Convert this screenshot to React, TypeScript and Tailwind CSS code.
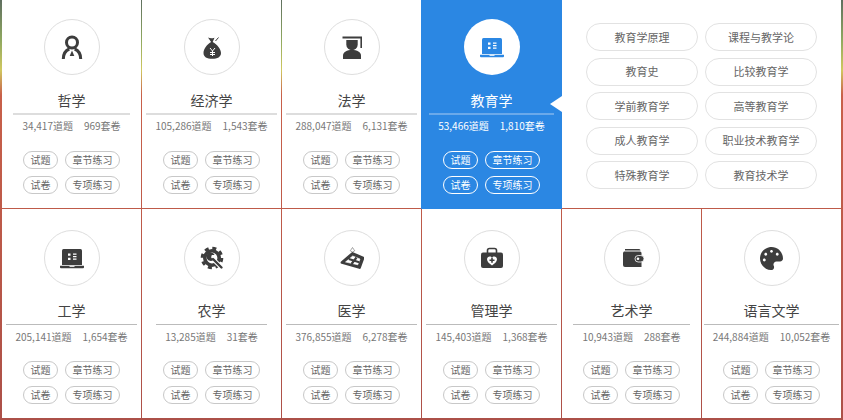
import { ReactNode } from "react";
import { FaPalette } from "react-icons/fa";

const DARK = "#3d3d3d";

function IconPhilosophy() {
  return (
    <svg width="24" height="24" viewBox="0 0 24 24" fill="none">
      <circle cx="12" cy="7.500" r="5.500" stroke={DARK} strokeWidth="3" />
      <path d="M3.300 24c0-5 2.500-8.500 6-10M20.700 24c0-5-2.500-8.500-6-10" stroke={DARK} strokeWidth="3" />
      <path d="M12 15.500l2.300 5.500h-4.600z" fill={DARK} />
    </svg>
  );
}

function IconMoneyBag() {
  return (
    <svg width="24" height="24" viewBox="0 0 24 24" fill="none">
      <path
        d="M8 2.500c2 1 4 1 6.500.2l-1.800 4.300c4.500 2.500 8.300 7 8.300 11 0 4-3.500 5.800-8.800 5.800s-8.700-1.800-8.700-5.800c0-4 3.300-8.500 7.600-11z"
        fill={DARK}
      />
      <path d="M15.500 6l3-3.500" stroke={DARK} strokeWidth="1" />
      <path d="M10 13l2.500 3 2.500-3M12.500 16v5M10 17.500h5M10 19.500h5" stroke="#fff" strokeWidth="1" />
    </svg>
  );
}

function IconGraduate() {
  return (
    <svg width="24" height="24" viewBox="0 0 24 24" fill="none">
      <path d="M2.500 1.500h19.500v11.500h-1.600V3.500H2.500z" fill={DARK} />
      <path d="M6.300 5h11.400v4.500a5.700 5.700 0 01-11.400 0z" fill={DARK} />
      <path d="M3 24v-3.500c0-3.500 4-5.500 9-5.500s9 2 9 5.500V24z" fill={DARK} />
    </svg>
  );
}

function IconLaptop({ color, cut }: { color: string; cut: string }) {
  return (
    <svg width="24" height="24" viewBox="0 0 24 24" fill="none">
      <path d="M2 4.500a1.500 1.500 0 011.500-1.500h17a1.500 1.500 0 011.500 1.500V19H2z" fill={color} />
      <path d="M0 19.800h24v1.400a1 1 0 01-1 1H1a1 1 0 01-1-1z" fill={color} />
      <path d="M9.500 19.800h5v1h-5z" fill={cut} />
      <path d="M8 7.500h2.500v2.200H8zM13 7.500h3.500v1.200H13zM13 10h3.500v1.200H13zM8 11.800h2.500V14H8zM13 12.500h3.500v1.200H13z" fill={cut} />
    </svg>
  );
}

function IconGear() {
  return (
    <svg width="24" height="24" viewBox="0 0 24 24" fill="none">
      <circle cx="12" cy="12" r="7.200" stroke={DARK} strokeWidth="3.600" />
      <circle cx="12" cy="12" r="9.800" stroke={DARK} strokeWidth="3" strokeDasharray="4 3.700" />
      <path d="M12 12l9 9" stroke="#fff" strokeWidth="4.500" />
      <path d="M13 13l8.500 8.500" stroke={DARK} strokeWidth="2.400" strokeLinecap="round" />
      <path d="M14 8.500a4.200 4.200 0 10-.5 5.500l-2.500-2.500.3-2.500z" fill={DARK} transform="rotate(10 12 12)" />
    </svg>
  );
}

function IconScale() {
  return (
    <svg width="24" height="24" viewBox="0 0 24 24" fill="none">
      <path d="M12.500 1.500l1.300 2 1 1.200-2.300 1.300-2.300-1.300 1-1.200z" stroke="#888" strokeWidth=".8" />
      <path d="M2 16.500L12.500 7.500 23 12 19.500 21.500z" fill={DARK} stroke={DARK} strokeWidth="2.800" strokeLinejoin="round" />
      <path d="M5.500 16 12.700 10 20 13 17.800 18.800z" fill="#fff" stroke="#fff" strokeWidth=".6" strokeLinejoin="round" />
      <path d="M16.500 11.500l-5 6.500M8.800 13l10.400 3.200" stroke={DARK} strokeWidth="2.200" />
    </svg>
  );
}

function IconBag() {
  return (
    <svg width="24" height="24" viewBox="0 0 24 24" fill="none">
      <path d="M7.500 8V4.500a2 2 0 012-2h5a2 2 0 012 2V8" stroke={DARK} strokeWidth="1.600" />
      <rect x="1" y="6.500" width="22" height="15.500" rx="2" fill={DARK} />
      <path d="M12 19.500c-2.500-1.700-5-3.700-5-6.200 0-1.700 1.300-2.800 2.700-2.800 1 0 1.800.5 2.300 1.300.5-.8 1.300-1.300 2.300-1.300 1.400 0 2.700 1.100 2.700 2.800 0 2.500-2.500 4.500-5 6.200z" fill="#fff" />
      <path d="M12 11.800v5M9.500 14.300h5" stroke={DARK} strokeWidth="1.600" />
    </svg>
  );
}

function IconWallet() {
  return (
    <svg width="24" height="24" viewBox="0 0 24 24" fill="none">
      <path d="M5 3h14a1.500 1.500 0 011.500 1.500H5z" fill={DARK} />
      <path d="M4 5.500h16a1.500 1.500 0 011.500 1.500v14H5a2 2 0 01-2-2V6.500z" fill={DARK} />
      <rect x="15" y="9.500" width="9" height="6.500" rx="3.200" fill={DARK} stroke="#fff" strokeWidth=".8" />
      <circle cx="18" cy="12.700" r="1.300" fill="#fff" />
    </svg>
  );
}

type Subject = {
  name: string;
  icon: ReactNode;
  questions: string;
  papers: string;
};

const topRow: Subject[] = [
  { name: "哲学", icon: <IconPhilosophy />, questions: "34,417", papers: "969" },
  { name: "经济学", icon: <IconMoneyBag />, questions: "105,286", papers: "1,543" },
  { name: "法学", icon: <IconGraduate />, questions: "288,047", papers: "6,131" },
];

const bottomRow: Subject[] = [
  { name: "工学", icon: <IconLaptop color={DARK} cut="#fff" />, questions: "205,141", papers: "1,654" },
  { name: "农学", icon: <IconGear />, questions: "13,285", papers: "31" },
  { name: "医学", icon: <IconScale />, questions: "376,855", papers: "6,278" },
  { name: "管理学", icon: <IconBag />, questions: "145,403", papers: "1,368" },
  { name: "艺术学", icon: <IconWallet />, questions: "10,943", papers: "288" },
  { name: "语言文学", icon: <FaPalette size={23} color={DARK} />, questions: "244,884", papers: "10,052" },
];

const subFields = [
  "教育学原理",
  "课程与教学论",
  "教育史",
  "比较教育学",
  "学前教育学",
  "高等教育学",
  "成人教育学",
  "职业技术教育学",
  "特殊教育学",
  "教育技术学",
];

function Pill({ label, wide, active }: { label: string; wide?: boolean; active?: boolean }) {
  return (
    <span
      className={`flex h-[18px] items-center justify-center rounded-full border text-[10px] leading-none ${
        wide ? "w-[55px]" : "w-[35px]"
      } ${active ? "border-white text-white" : "border-[#c8c8c8] text-[#666]"}`}
    >
      {label}
    </span>
  );
}

function Card({ subject, lower, active }: { subject: Subject; lower?: boolean; active?: boolean }) {
  return (
    <div
      className={`relative flex flex-col items-center ${
        lower ? "pt-[21px]" : "pt-[19px]"
      } ${active ? "-mx-px -mb-px bg-[#2b87e3]" : "bg-white"}`}
    >
      <div
        className={`flex size-14 items-center justify-center rounded-full ${
          active ? "bg-white" : "border border-[#dedede]"
        }`}
      >
        {subject.icon}
      </div>
      <div className={`w-fit whitespace-nowrap ${lower ? "mt-[13px]" : "mt-[14px]"}`}>
        {/* the rule under the name runs a bit past the stats line */}
        <div
          className={`-mx-[9px] flex h-[26px] items-center justify-center text-sm ${
            active ? "text-white" : "text-[#444]"
          } ${
            lower
              ? "border-b border-[#bbb] pb-[3px]"
              : active
                ? "border-b-2 border-[#6aa9ea] pb-[2px]"
                : "border-b-2 border-[#ddd] pb-[2px]"
          }`}
        >
          {subject.name}
        </div>
        <div
          className={`flex items-center justify-center gap-[11px] text-[10px] ${
            lower ? "h-[22px]" : "h-[21px]"
          } ${active ? "text-white" : "text-[#777]"}`}
        >
          <span>{subject.questions}道题</span>
          <span>{subject.papers}套卷</span>
        </div>
      </div>
      <div
        className={`grid grid-cols-[35px_55px] gap-x-[7px] gap-y-[7px] ${
          lower ? "mt-[14px]" : "mt-[15px]"
        }`}
      >
        <Pill label="试题" active={active} />
        <Pill label="章节练习" wide active={active} />
        <Pill label="试卷" active={active} />
        <Pill label="专项练习" wide active={active} />
      </div>
      {active && (
        <span className="absolute top-[96px] right-0 size-0 border-y-8 border-r-[12px] border-y-transparent border-r-white" />
      )}
    </div>
  );
}

export default function App() {
  return (
    <div className="grid h-[420px] w-[843px] grid-cols-[repeat(6,139px)] grid-rows-[208px_209px] gap-px overflow-hidden bg-[linear-gradient(180deg,#5f6f60_0,#8fa860_40px,#d0c860_70px,#c8604a_95px,#ac5048_100%)] pl-[2px] font-['Noto_Sans_CJK_SC','Noto_Sans',sans-serif]">
      {topRow.map((s) => (
        <Card key={s.name} subject={s} />
      ))}
      <Card
        subject={{
          name: "教育学",
          icon: <IconLaptop color="#2b87e3" cut="#fff" />,
          questions: "53,466",
          papers: "1,810",
        }}
        active
      />
      <div className="col-span-2 grid grid-cols-[112px_112px] content-start justify-center gap-x-[7px] gap-y-[6.5px] bg-white pt-[23px]">
        {subFields.map((f) => (
          <span
            key={f}
            className="flex h-[28px] items-center justify-center rounded-full border border-[#e2e2e2] text-[11px] text-[#666]"
          >
            {f}
          </span>
        ))}
      </div>
      {bottomRow.map((s) => (
        <Card key={s.name} subject={s} lower />
      ))}
    </div>
  );
}
